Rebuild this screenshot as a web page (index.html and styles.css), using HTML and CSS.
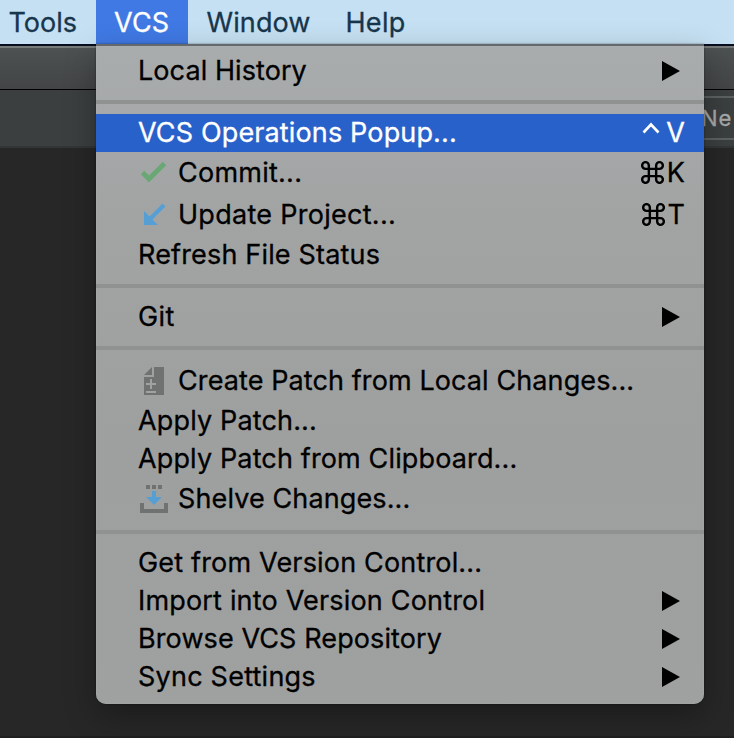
FILE: index.html
```
<!DOCTYPE html>
<html lang="en">
<head>
<meta charset="utf-8">
<title>VCS menu</title>
<link rel="stylesheet" href="styles.css">
</head>
<body>
<div class="screen">
  <nav class="menubar">
    <span class="bar-item tools">Tools</span>
    <span class="bar-item vcs active">VCS</span>
    <span class="bar-item window">Window</span>
    <span class="bar-item help">Help</span>
  </nav>
  <div class="titlebar"></div>
  <div class="toolbar"><div class="field">Ne</div></div>
  <div class="editor"></div>

  <div class="menu">
    <div class="row"><span class="t-local">Local History</span><svg class="arrow" viewBox="0 0 18 20"><path d="M0 0L18 10L0 20Z"/></svg></div>
    <div class="sep"></div>
    <div class="row selected"><span class="t-popup">VCS Operations Popup...</span><span class="key"><svg class="ctrl" viewBox="0 0 18 12"><path d="M1.500 10.500L9 2.500L16.500 10.500"/></svg>V</span></div>
    <div class="row tall">
      <svg class="icon" viewBox="0 0 30 30"><path d="M4.500 14.500L11 21L26.500 5.500" fill="none" stroke="#69a875" stroke-width="4.800"/></svg>
      <span class="t-commit">Commit...</span><span class="key"><svg class="cmd" viewBox="0 0 22 22"><path d="M7.500 7.500V4.300A3.200 3.200 0 1 0 4.300 7.500H17.700A3.200 3.200 0 1 0 14.500 4.300V17.700A3.200 3.200 0 1 0 17.700 14.500H4.300A3.200 3.200 0 1 0 7.500 17.700Z"/></svg>K</span>
    </div>
    <div class="row tall">
      <svg class="icon" viewBox="0 0 30 30"><path d="M26 5L11 20" fill="none" stroke="#559fd5" stroke-width="4"/><path d="M6 11V25H20Z" fill="#559fd5"/></svg>
      <span class="t-update">Update Project...</span><span class="key"><svg class="cmd" viewBox="0 0 22 22"><path d="M7.500 7.500V4.300A3.200 3.200 0 1 0 4.300 7.500H17.700A3.200 3.200 0 1 0 14.500 4.300V17.700A3.200 3.200 0 1 0 17.700 14.500H4.300A3.200 3.200 0 1 0 7.500 17.700Z"/></svg>T</span>
    </div>
    <div class="row"><span class="t-refresh">Refresh File Status</span></div>
    <div class="sep"></div>
    <div class="row"><span class="t-git">Git</span><svg class="arrow" viewBox="0 0 18 20"><path d="M0 0L18 10L0 20Z"/></svg></div>
    <div class="sep"></div>
    <div class="row tall">
      <svg class="icon" viewBox="0 0 30 30"><path d="M16 1H26V29H6V11H16Z" fill="#707272"/><path d="M6 9L14 1V9Z" fill="#707272"/><path d="M8 18H18M13 13V23M8 26H18" fill="none" stroke="#a0a2a2" stroke-width="2"/></svg>
      <span class="t-create">Create Patch from Local Changes...</span>
    </div>
    <div class="row"><span class="t-apply">Apply Patch...</span></div>
    <div class="row"><span class="t-clip">Apply Patch from Clipboard...</span></div>
    <div class="row tall">
      <svg class="icon" viewBox="0 0 30 30"><path d="M8 1h4v4H8zM14 1h4v4h-4zM20 1h4v4h-4zM2 19H6V25H26V19H30V29H2Z" fill="#707272"/><path d="M14 7H18V13H24L16 21L8 13H14Z" fill="#559fd5"/></svg>
      <span class="t-shelve">Shelve Changes...</span>
    </div>
    <div class="sep"></div>
    <div class="row"><span class="t-get">Get from Version Control...</span></div>
    <div class="row"><span class="t-import">Import into Version Control</span><svg class="arrow" viewBox="0 0 18 20"><path d="M0 0L18 10L0 20Z"/></svg></div>
    <div class="row"><span class="t-browse">Browse VCS Repository</span><svg class="arrow" viewBox="0 0 18 20"><path d="M0 0L18 10L0 20Z"/></svg></div>
    <div class="row"><span class="t-sync">Sync Settings</span><svg class="arrow" viewBox="0 0 18 20"><path d="M0 0L18 10L0 20Z"/></svg></div>
  </div>
</div>
</body>
</html>
```

FILE: styles.css
```
* { box-sizing: border-box; }
body { margin: 0; background: #272727; font-family: Inter, "Liberation Sans", sans-serif; -webkit-text-stroke: .3px currentColor; }
.screen { position: relative; width: 734px; height: 738px; overflow: hidden; display: flex; flex-direction: column; }
.menubar { display: flex; height: 44px; flex: none; background: #c5e0f2; color: #17364c; font-size: 27px; line-height: 46px; }
.bar-item { white-space: nowrap; }
.tools { width: 96px; padding-left: 8.5px; }
.vcs { width: 92px; padding-left: 18px; letter-spacing: .2px; }
.window { width: 140px; padding-left: 18.5px; letter-spacing: .1px; }
.help { padding-left: 17.5px; letter-spacing: .3px; }
.active { background: #4079e4; color: #fff; }
.titlebar { height: 46px; flex: none; border-top: 2px solid #080d20; border-bottom: 1px solid #000; background: linear-gradient(#767a79 0 2px, #4d5152 2px, #434546 100%); }
.toolbar { height: 58px; flex: none; display: flex; justify-content: flex-end; align-items: flex-start; padding-top: 6px; background: #3b3f40; border-bottom: 2px solid #333637; }
.field { width: 34px; height: 44px; border-top: 2px solid #5e6162; border-bottom: 2px solid #5e6162; padding-left: 1px; overflow: hidden; color: #a8aaaa; font-size: 22px; line-height: 41px; letter-spacing: 1px; }
.editor { flex: 1; background: #272727; border-bottom: 2px solid #201f20; }
.menu { position: absolute; left: 96px; top: 44px; width: 608px; height: 660px; padding: 6px 0 8px; border-top: 2px solid #66696b; border-radius: 0 0 10px 10px; background: linear-gradient(#a9acad, #a2a4a4 25%, #9e9f9f 60%, #9fa1a1); box-shadow: 0 12px 32px rgba(0,0,0,.3), 0 0 2px rgba(0,0,0,.5), inset 0 0 1px #c0c2c2; color: #000; font-size: 27px; }
.row { display: flex; align-items: center; height: 38px; padding: 0 19px 0 42px; line-height: 38px; white-space: nowrap; }
.tall { height: 42px; }
.selected { background: #2961ca; color: #fff; }
.sep { height: 24px; padding: 10px 0; background: #909292 content-box; }
.icon { width: 30px; height: 30px; margin: 0 10px 0 0; flex: none; }
.arrow { width: 18px; height: 20px; margin: 0 5px 1px auto; flex: none; }
.key { display: flex; align-items: center; margin-left: auto; }
.cmd { width: 23px; height: 23px; margin: 0 3px 2px 0; fill: none; stroke: currentColor; stroke-width: 2.3; }
.ctrl { width: 18px; height: 12px; margin: -10px 6px 0 0; fill: none; stroke: currentColor; stroke-width: 2.6; }

/* Per-label tracking */
.t-local { letter-spacing: .08px; }
.t-popup { letter-spacing: .14px; }
.t-commit { letter-spacing: .25px; }
.t-update { letter-spacing: .28px; }
.t-refresh { letter-spacing: .17px; }
.t-git { letter-spacing: .35px; }
.t-create { letter-spacing: .1px; }
.t-apply { letter-spacing: .15px; }
.t-clip { letter-spacing: .14px; }
.t-shelve { letter-spacing: .12px; }
.t-get { letter-spacing: .17px; }
.t-import { letter-spacing: .18px; }
.t-browse { letter-spacing: .1px; }
.t-sync { letter-spacing: .23px; }
```
